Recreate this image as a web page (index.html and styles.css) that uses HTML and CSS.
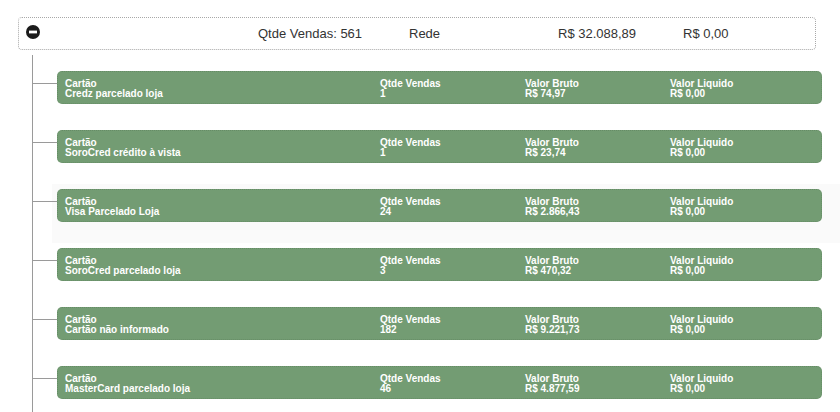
FILE: index.html
```html
<!DOCTYPE html>
<html lang="pt-BR">
<head>
<meta charset="utf-8">
<title>Vendas por Cartão</title>
<link rel="stylesheet" href="styles.css">
</head>
<body>
<div class="summary">
  <div class="summary-cell summary-first">
    <svg class="toggle" viewBox="0 0 14 14" width="14" height="14" aria-hidden="true">
      <circle cx="7" cy="7" r="7" fill="#1b1b1b"/>
      <rect x="3" y="5.6" width="8" height="2.8" fill="#fff"/>
    </svg>
  </div>
  <div class="summary-cell summary-qtde">Qtde Vendas: 561</div>
  <div class="summary-cell summary-rede">Rede</div>
  <div class="summary-cell summary-bruto">R$ 32.088,89</div>
  <div class="summary-cell">R$ 0,00</div>
</div>

<div class="tree">
  <div class="row">
    <div class="card">
      <div class="col"><span>Cartão</span><span>Credz parcelado loja</span></div>
      <div class="col"><span>Qtde Vendas</span><span>1</span></div>
      <div class="col"><span>Valor Bruto</span><span>R$ 74,97</span></div>
      <div class="col"><span>Valor Liquido</span><span>R$ 0,00</span></div>
    </div>
  </div>
  <div class="row">
    <div class="card">
      <div class="col"><span>Cartão</span><span>SoroCred crédito à vista</span></div>
      <div class="col"><span>Qtde Vendas</span><span>1</span></div>
      <div class="col"><span>Valor Bruto</span><span>R$ 23,74</span></div>
      <div class="col"><span>Valor Liquido</span><span>R$ 0,00</span></div>
    </div>
  </div>
  <div class="row row-hover">
    <div class="card">
      <div class="col"><span>Cartão</span><span>Visa Parcelado Loja</span></div>
      <div class="col"><span>Qtde Vendas</span><span>24</span></div>
      <div class="col"><span>Valor Bruto</span><span>R$ 2.866,43</span></div>
      <div class="col"><span>Valor Liquido</span><span>R$ 0,00</span></div>
    </div>
  </div>
  <div class="row">
    <div class="card">
      <div class="col"><span>Cartão</span><span>SoroCred parcelado loja</span></div>
      <div class="col"><span>Qtde Vendas</span><span>3</span></div>
      <div class="col"><span>Valor Bruto</span><span>R$ 470,32</span></div>
      <div class="col"><span>Valor Liquido</span><span>R$ 0,00</span></div>
    </div>
  </div>
  <div class="row">
    <div class="card">
      <div class="col"><span>Cartão</span><span>Cartão não informado</span></div>
      <div class="col"><span>Qtde Vendas</span><span>182</span></div>
      <div class="col"><span>Valor Bruto</span><span>R$ 9.221,73</span></div>
      <div class="col"><span>Valor Liquido</span><span>R$ 0,00</span></div>
    </div>
  </div>
  <div class="row">
    <div class="card">
      <div class="col"><span>Cartão</span><span>MasterCard parcelado loja</span></div>
      <div class="col"><span>Qtde Vendas</span><span>46</span></div>
      <div class="col"><span>Valor Bruto</span><span>R$ 4.877,59</span></div>
      <div class="col"><span>Valor Liquido</span><span>R$ 0,00</span></div>
    </div>
  </div>
</div>
</body>
</html>
```
FILE: styles.css
```css
html, body {
  margin: 0;
  padding: 0;
  overflow: hidden;
  background: #ffffff;
  font-family: "Liberation Sans", Arial, sans-serif;
}

body {
  padding-top: 17px;
}

.summary {
  box-sizing: border-box;
  margin-left: 18px;
  width: 798px;
  height: 33px;
  border: 1px dotted #a8a8a8;
  border-radius: 4px;
  display: grid;
  grid-template-columns: 239px 151px 149px 125px 1fr;
  align-items: start;
  font-size: 13px;
  line-height: 15px;
  color: #333333;
}

.summary-cell {
  padding-top: 8px;
}

.summary-first {
  padding-left: 7px;
  padding-top: 7px;
  height: 14px;
}

.toggle {
  display: block;
}

.tree {
  margin-left: 32px;
  margin-top: 5px;
  padding-top: 11px;
  border-left: 1px solid #9a9a9a;
}

.row {
  position: relative;
  margin-left: 19px;
  padding: 5px 18px 21px 5px;
}

.row::before {
  content: "";
  position: absolute;
  left: -19px;
  top: 17px;
  width: 24px;
  height: 1px;
  background: #9a9a9a;
}

.row-hover {
  background: #fafafa;
}

.card {
  box-sizing: border-box;
  height: 33px;
  background: #739c73;
  border: 1px dotted #668c66;
  border-radius: 5px;
  padding: 7px 0 0 7px;
  display: grid;
  grid-template-columns: 315px 145px 145px 1fr;
  color: #ffffff;
  font-size: 10px;
  font-weight: bold;
  line-height: 10px;
}

.col {
  display: flex;
  flex-direction: column;
  white-space: nowrap;
}
```
